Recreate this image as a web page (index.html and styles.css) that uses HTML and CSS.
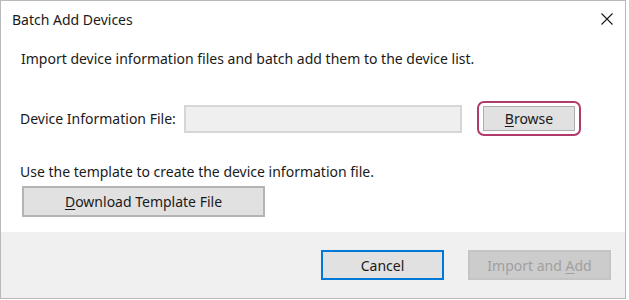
FILE: index.html
```html
<!DOCTYPE html>
<html lang="en-US">
  <head>
    <meta charset="UTF-8" />
    <meta name="viewport" content="width=device-width, initial-scale=1.0" />
    <title>Batch Add Devices</title>
    <link rel="stylesheet" href="styles.css">
  </head>
  <body>
    <div class="dialog">
      <div class="titlebar">
        <span class="title">Batch Add Devices</span>
        <span class="close">
          <svg width="12" height="12" viewBox="0 0 12 12">
            <path d="M0.5 0.5 L11.5 11.5 M11.5 0.5 L0.5 11.5" stroke="#1a1a1a" stroke-width="1.1" fill="none"/>
          </svg>
        </span>
      </div>

      <div class="content">
        <p class="intro">Import device information files and batch add them to the device list.</p>

        <div class="file-row">
          <label class="file-label">Device Information File:</label>
          <div class="file-input"></div>
          <div class="focus-ring">
            <button class="btn browse"><u>B</u>rowse</button>
          </div>
        </div>

        <p class="hint">Use the template to create the device information file.</p>
        <button class="btn download"><u>D</u>ownload Template File</button>
      </div>
      <!-- content -->

      <div class="footer">
        <button class="btn cancel">Cancel</button>
        <button class="btn disabled">Import and <u>A</u>dd</button>
      </div>
    </div>
  </body>
</html>
```

FILE: styles.css
```css
body {
  margin: 0;
  background: #ffffff;
  font-family: "Noto Sans", "Open Sans", sans-serif;
  font-size: 14px;
  color: #1a1a1a;
}

.dialog {
  width: 626px;
  height: 299px;
  box-sizing: border-box;
  border: 1px solid #b9b9b9;
  display: flex;
  flex-direction: column;
  background: #ffffff;
}

.titlebar {
  height: 36px;
  display: flex;
  align-items: center;
  justify-content: space-between;
  padding: 0 10px 0 11px;
}
.title {
  font-size: 14px;
}
.close {
  display: flex;
  width: 16px;
  height: 16px;
  align-items: center;
  justify-content: center;
}

.content {
  flex: 1;
  padding: 0 0 0 19px;
}
.intro {
  margin: 12px 0 0 1px;
  line-height: 20px;
}

.file-row {
  display: flex;
  align-items: center;
  margin-top: 32px;
}
.file-label {
  width: 164px;
}
.file-input {
  width: 274px;
  height: 24px;
  border: 2px solid #d6d6d6;
  background: #efefef;
}
.focus-ring {
  margin-left: 15px;
  padding: 3px 4px 3px 4px;
  border: 2px solid #b03a6a;
  border-radius: 7px;
}

.btn {
  font-family: inherit;
  font-size: 14px;
  color: #1a1a1a;
  background: #e1e1e1;
  border: 1px solid #adadad;
  padding: 0;
  margin: 0;
}
.btn u {
  text-decoration-thickness: 1px;
  text-underline-offset: 2px;
}
.browse {
  width: 92px;
  height: 25px;
}

.hint {
  margin: 26px 0 0 0;
  line-height: 20px;
}
.download {
  margin: 4px 0 0 2px;
  width: 243px;
  height: 31px;
  border-width: 2px;
  border-color: #b4b4b4;
}

.footer {
  height: 66px;
  background: #f0f0f0;
  display: flex;
  align-items: center;
  justify-content: flex-end;
  gap: 24px;
  padding-right: 14px;
}
.cancel {
  width: 123px;
  height: 30px;
  border: 2px solid #0078d7;
}
.disabled {
  width: 143px;
  height: 30px;
  background: #cccccc;
  border: 2px solid #c4c4c4;
  color: #a0a0a0;
}
```
